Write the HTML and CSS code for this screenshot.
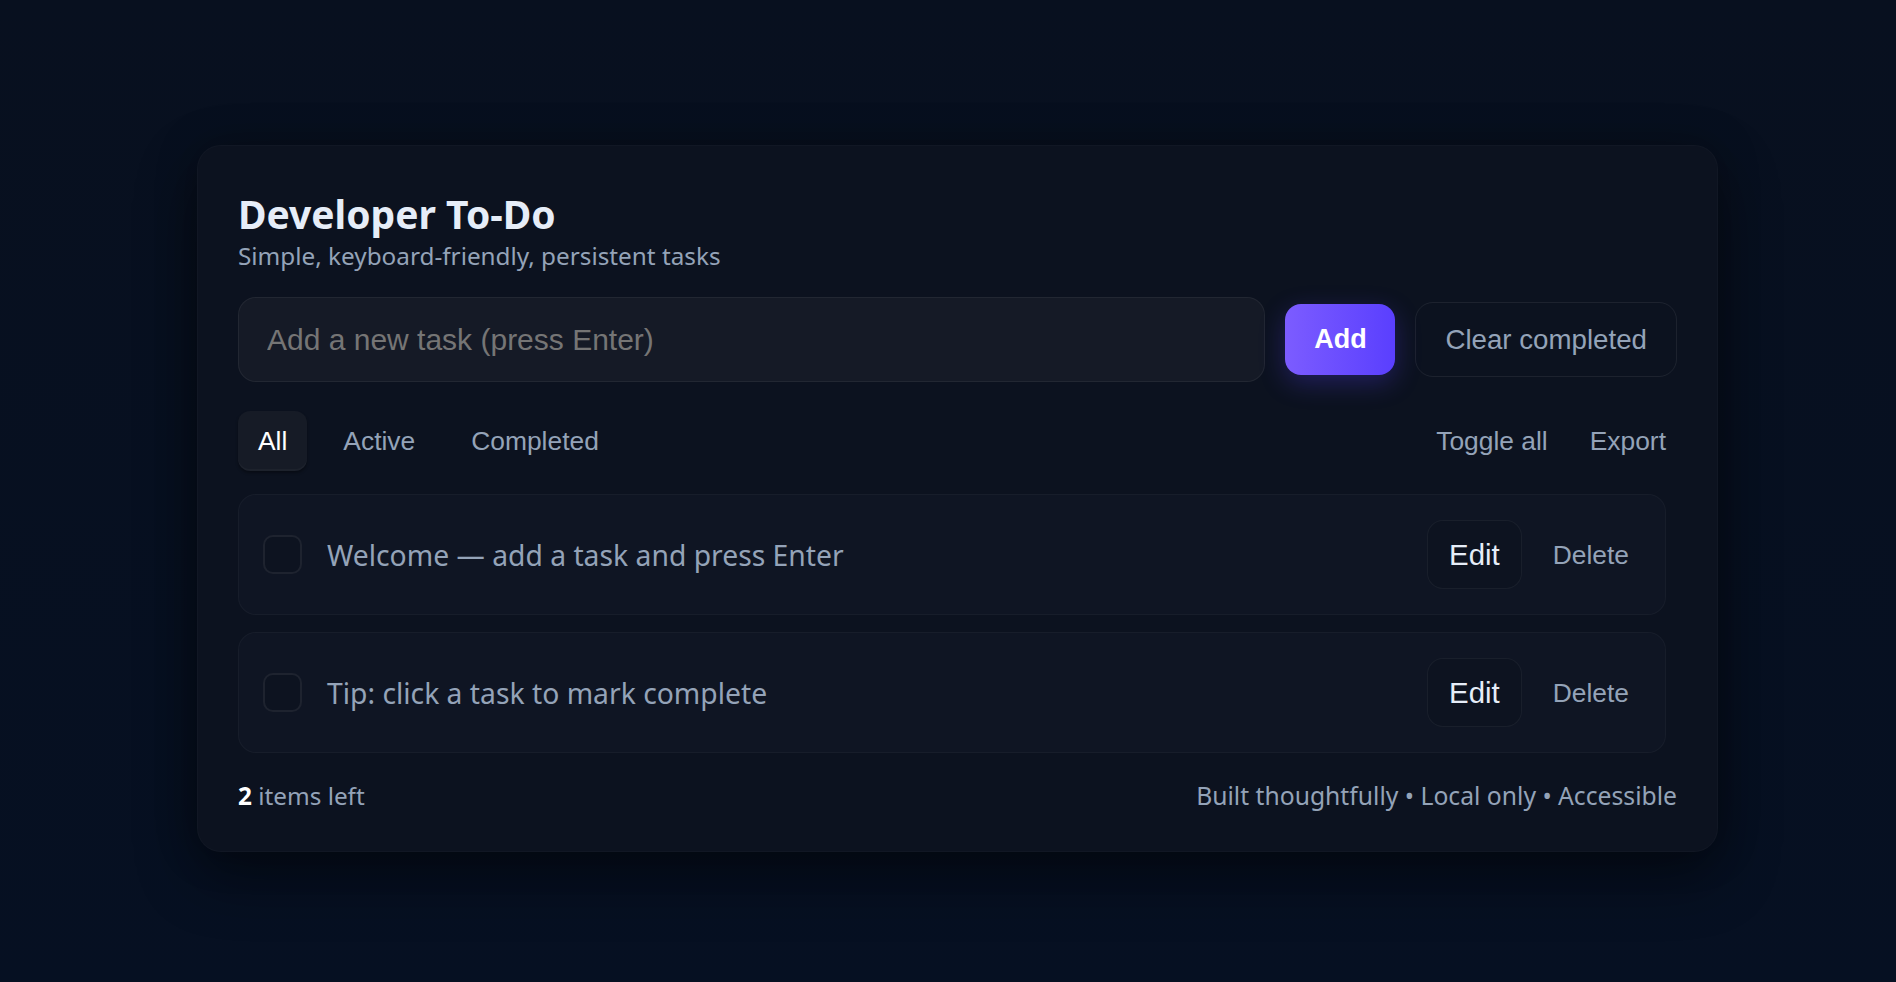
FILE: index.html
```html
<!DOCTYPE html>
<html lang="en">
<head>
<meta charset="utf-8">
<title>Developer To-Do</title>
<link rel="stylesheet" href="styles.css">
</head>
<body>
<main class="card">
  <header class="header">
    <h1 class="title">Developer To-Do</h1>
    <p class="subtitle">Simple, keyboard-friendly, persistent tasks</p>
  </header>

  <div class="add-row">
    <input class="new-task" type="text" placeholder="Add a new task (press Enter)">
    <button class="btn-primary">Add</button>
    <button class="btn-outline">Clear completed</button>
  </div>

  <div class="toolbar">
    <div class="tabs">
      <button class="tab tab-active">All</button>
      <button class="tab">Active</button>
      <button class="tab">Completed</button>
    </div>
    <div class="actions">
      <button class="btn-plain">Toggle all</button>
      <button class="btn-plain">Export</button>
    </div>
  </div>

  <ul class="list">
    <li class="task">
      <span class="check"></span>
      <span class="task-text">Welcome — add a task and press Enter</span>
      <div class="task-actions">
        <button class="btn-edit">Edit</button>
        <button class="btn-plain">Delete</button>
      </div>
    </li>
    <li class="task">
      <span class="check"></span>
      <span class="task-text">Tip: click a task to mark complete</span>
      <div class="task-actions">
        <button class="btn-edit">Edit</button>
        <button class="btn-plain">Delete</button>
      </div>
    </li>
  </ul>

  <footer class="footer">
    <span class="count"><strong>2</strong> items left</span>
    <span class="meta">Built thoughtfully • Local only • Accessible</span>
  </footer>
</main>
</body>
</html>
```

FILE: styles.css
```css
* { box-sizing: border-box; }

html, body { height: 100%; }

body {
  margin: 0;
  background: linear-gradient(180deg, #08101f 0%, #061022 100%);
  font-family: "Noto Sans", "Open Sans", sans-serif;
  color: #e6edf8;
  display: flex;
  justify-content: center;
  align-items: flex-start;
  padding: 145px 0 0 19px;
}

.card {
  width: 1521px;
  background: #0c121f;
  border: 1px solid rgba(255, 255, 255, 0.025);
  border-radius: 24px;
  padding: 44px 40px 39px;
  box-shadow: 0 24px 60px rgba(0, 0, 0, 0.45), 0 0 40px rgba(0, 0, 0, 0.25);
}

.title {
  margin: 0;
  font-size: 39px;
  line-height: 48px;
  font-weight: 700;
  color: #e6edf8;
}

.subtitle {
  margin: 2px 0 0;
  font-size: 24.3px;
  line-height: 32px;
  color: #94a3b8;
}

.add-row {
  display: flex;
  align-items: center;
  gap: 20px;
  margin-top: 25px;
}

.new-task {
  flex: 1;
  min-width: 0;
  height: 85px;
  padding: 0 28px;
  background: #151a26;
  border: 1px solid rgba(255, 255, 255, 0.06);
  border-radius: 18px;
  font-family: "Liberation Sans", Arial, sans-serif;
  font-size: 30px;
  color: #e6edf8;
  outline: none;
}

.new-task::placeholder { color: #757575; }

button {
  font-family: "Liberation Sans", Arial, sans-serif;
  cursor: pointer;
}

.btn-primary {
  width: 110px;
  padding: 20px 0;
  border: 0;
  border-radius: 16px;
  background: linear-gradient(90deg, #7c5cff 0%, #5a3ffe 100%);
  color: #ffffff;
  font-size: 27px;
  font-weight: 700;
  line-height: 31px;
  text-align: center;
  box-shadow: 0 8px 26px rgba(90, 63, 254, 0.28);
}

.btn-outline {
  padding: 21px 29px;
  background: transparent;
  border: 1px solid rgba(255, 255, 255, 0.07);
  border-radius: 18px;
  color: #94a3b8;
  font-size: 27.7px;
  line-height: 31px;
}

.toolbar {
  display: flex;
  justify-content: space-between;
  align-items: center;
  margin-top: 29px;
}

.tabs {
  display: flex;
  align-items: center;
  gap: 16px;
}

.actions {
  display: flex;
  align-items: center;
  gap: 18px;
}

.tab {
  padding: 15px 20px;
  background: transparent;
  border: 0;
  border-radius: 12px;
  color: #94a3b8;
  font-size: 26.4px;
  line-height: 30px;
}

.tab-active {
  background: #161b26;
  color: #ffffff;
  box-shadow: inset 0 -2px 0 rgba(255, 255, 255, 0.03), 0 2px 3px rgba(0, 0, 0, 0.35);
}

.btn-plain {
  padding: 12px 12px;
  background: transparent;
  border: 0;
  color: #94a3b8;
  font-size: 26.4px;
  line-height: 30px;
}

.actions .btn-plain:last-child { padding-right: 11px; }

.list {
  list-style: none;
  margin: 23px 0 0;
  padding: 0 11px 0 0;
  display: flex;
  flex-direction: column;
  gap: 17px;
}

.task {
  height: 121px;
  display: flex;
  align-items: center;
  gap: 25px;
  padding: 0 24px;
  background: #0f1523;
  border: 1px solid rgba(255, 255, 255, 0.035);
  border-radius: 18px;
}

.check {
  width: 39px;
  height: 39px;
  flex: none;
  border: 2px solid rgba(255, 255, 255, 0.07);
  border-radius: 10px;
  background: #0d1320;
}

.task-text {
  flex: 1;
  font-size: 28.3px;
  line-height: 36px;
  color: #94a3b8;
}

.task-actions {
  display: flex;
  align-items: center;
  gap: 19px;
}

.btn-edit {
  padding: 16px 21px;
  background: #0d1320;
  border: 1px solid rgba(255, 255, 255, 0.05);
  border-radius: 16px;
  color: #e6edf8;
  font-size: 29.4px;
  line-height: 35px;
}

.footer {
  display: flex;
  justify-content: space-between;
  align-items: center;
  margin-top: 27px;
  font-size: 24.3px;
  line-height: 32px;
  color: #94a3b8;
}

.count strong {
  color: #ffffff;
  font-weight: 700;
}

.meta { font-size: 24.7px; }
```
